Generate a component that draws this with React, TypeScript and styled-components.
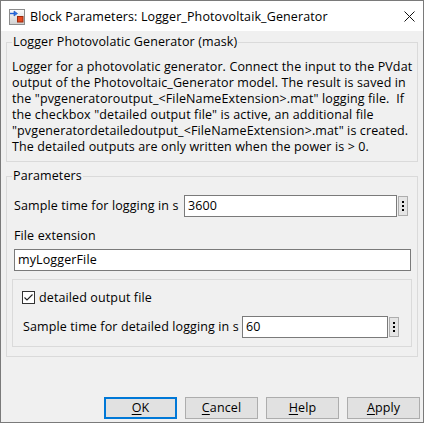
import React from "react";
import styled, { createGlobalStyle } from "styled-components";

const Global = createGlobalStyle`
  html, body { margin: 0; padding: 0; background: #ffffff; }
  body {
    font-family: "Open Sans", "Noto Sans", "DejaVu Sans", sans-serif;
    font-size: 12.5px;
    letter-spacing: 0.12px;
    color: #000;
  }
  * { box-sizing: border-box; }
`;

const Window = styled.div`
  width: 424px;
  height: 423px;
  border: 1px solid #7a7a7a;
  display: flex;
  flex-direction: column;
  background: #f0f0f0;
  overflow: hidden;
`;

const TitleBar = styled.div`
  flex: none;
  height: 30px;
  background: #ffffff;
  display: flex;
  align-items: center;
  padding: 1px 0 0 8px;
`;

const TitleText = styled.span`
  flex: 1;
  margin-left: 5px;
  line-height: 16px;
  white-space: nowrap;
`;

const CloseIcon = styled.svg`
  flex: none;
  margin-right: 8px;
`;

const Body = styled.div`
  flex: 1;
  display: flex;
  flex-direction: column;
  padding: 3px 3px 3px 5px;
`;

const Group = styled.fieldset<{ $pb: number; $mt?: number }>`
  margin: ${(p) => p.$mt ?? 0}px 2px 0 0;
  padding: 0 5px ${(p) => p.$pb}px 5px;
  border: 1px solid #dadada;
  min-width: 0;
`;

const Legend = styled.legend`
  padding: 0 1px;
  margin: 0;
  line-height: 16px;
`;

const Description = styled.p`
  margin: 9px 0 0 0;
  line-height: 16px;
  white-space: nowrap;
`;

const Row = styled.div<{ $mt: number; $ml: number; $mr: number }>`
  display: flex;
  align-items: center;
  margin: ${(p) => p.$mt}px ${(p) => p.$mr}px 0 ${(p) => p.$ml}px;
  height: 22px;
`;

const Label = styled.span<{ $w?: number }>`
  flex: none;
  width: ${(p) => (p.$w ? `${p.$w}px` : "auto")};
  line-height: 16px;
  white-space: nowrap;
`;

const BlockLabel = styled.div`
  margin: 11px 0 0 2px;
  line-height: 16px;
`;

const Field = styled.div<{ $full?: boolean }>`
  flex: 1;
  height: 22px;
  background: #ffffff;
  border: 1px solid #7a7a7a;
  padding: 0 3px;
  display: flex;
  align-items: center;
  line-height: 16px;
  ${(p) => (p.$full ? "margin: 5px 1px 0 2px;" : "")}
`;

const DotsButton = styled.div`
  flex: none;
  width: 10px;
  height: 20px;
  margin-left: 1px;
  border: 1px solid #adadad;
  background: #e5e5e5;
  display: flex;
  flex-direction: column;
  align-items: center;
  justify-content: center;
  gap: 2px;
`;

const Dot = styled.span`
  width: 2px;
  height: 2px;
  background: #000;
`;

const InnerGroup = styled.div`
  margin-top: 8px;
  border: 1px solid #dadada;
  padding: 10px 12px 8px 9px;
`;

const CheckRow = styled.label`
  display: flex;
  align-items: center;
  height: 15px;
  gap: 4px;
`;

const CheckBox = styled.span`
  flex: none;
  width: 13px;
  height: 13px;
  border: 1px solid #333333;
  background: #ffffff;
  display: flex;
`;

const ButtonBar = styled.div`
  margin-top: auto;
  display: flex;
  justify-content: flex-end;
  gap: 8px;
`;

const Button = styled.div<{ $default?: boolean }>`
  width: 73px;
  height: 22px;
  background: #e1e1e1;
  border: ${(p) => (p.$default ? "2px solid #0078d7" : "1px solid #adadad")};
  display: flex;
  align-items: center;
  justify-content: center;
  line-height: 16px;
`;

const Key = styled.span`
  text-decoration: underline;
  text-underline-offset: 2px;
`;

function BlockIcon() {
  return (
    <svg width="16" height="16" viewBox="0 0 16 16">
      <defs>
        <linearGradient id="bg" x1="0" y1="0" x2="0" y2="1">
          <stop offset="0" stopColor="#fbfbfb" />
          <stop offset="1" stopColor="#cfcfcf" />
        </linearGradient>
      </defs>
      <rect x="0.5" y="0.5" width="15" height="15" fill="url(#bg)" stroke="#8c8c8c" />
      <path d="M1 4.5 H5" stroke="#1f5fd6" strokeWidth="1.4" />
      <path d="M5 2 L8.5 4.5 L5 7 Z" fill="#2d73e8" stroke="#1a4fb0" strokeWidth="0.6" />
      <rect x="8.5" y="7.5" width="5.5" height="5.5" fill="#e8481f" stroke="#9c2a0c" />
    </svg>
  );
}

function Dots() {
  return (
    <DotsButton>
      <Dot />
      <Dot />
      <Dot />
    </DotsButton>
  );
}

export default function App() {
  return (
    <>
      <Global />
      <Window>
        <TitleBar>
          <BlockIcon />
          <TitleText>Block Parameters: Logger_Photovoltaik_Generator</TitleText>
          <CloseIcon width="11" height="11" viewBox="0 0 11 11">
            <path d="M0.5 0.5 L10.5 10.5 M10.5 0.5 L0.5 10.5" stroke="#111" strokeWidth="1" />
          </CloseIcon>
        </TitleBar>
        <Body>
          <Group $pb={6}>
            <Legend>Logger Photovolatic Generator (mask)</Legend>
            <Description>
              Logger for a photovolatic generator. Connect the input to the PVdat
              <br />
              output of the Photovoltaic_Generator model. The result is saved in
              <br />
              the "pvgeneratoroutput_&lt;FileNameExtension&gt;.mat" logging file.&nbsp; If
              <br />
              the checkbox "detailed output file" is active, an additional file
              <br />
              "pvgeneratordetailedoutput_&lt;FileNameExtension&gt;.mat" is created.
              <br />
              The detailed outputs are only written when the power is &gt; 0.
            </Description>
          </Group>
          <Group $pb={9} $mt={6}>
            <Legend>Parameters</Legend>
            <Row $mt={11} $ml={2} $mr={4}>
              <Label $w={170}>Sample time for logging in s</Label>
              <Field>3600</Field>
              <Dots />
            </Row>
            <BlockLabel>File extension</BlockLabel>
            <Field $full>myLoggerFile</Field>
            <InnerGroup>
              <CheckRow>
                <CheckBox>
                  <svg width="11" height="11" viewBox="0 0 11 11">
                    <path d="M1.5 5.5 L4 8 L9.5 2.5" fill="none" stroke="#222" strokeWidth="1.1" />
                  </svg>
                </CheckBox>
                detailed output file
              </CheckRow>
              <Row $mt={11} $ml={1} $mr={0}>
                <Label $w={219}>Sample time for detailed logging in s</Label>
                <Field>60</Field>
                <Dots />
              </Row>
            </InnerGroup>
          </Group>
          <ButtonBar>
            <Button $default>
              <span>
                <Key>O</Key>K
              </span>
            </Button>
            <Button>
              <span>
                <Key>C</Key>ancel
              </span>
            </Button>
            <Button>
              <span>
                <Key>H</Key>elp
              </span>
            </Button>
            <Button>
              <span>
                <Key>A</Key>pply
              </span>
            </Button>
          </ButtonBar>
        </Body>
      </Window>
    </>
  );
}
